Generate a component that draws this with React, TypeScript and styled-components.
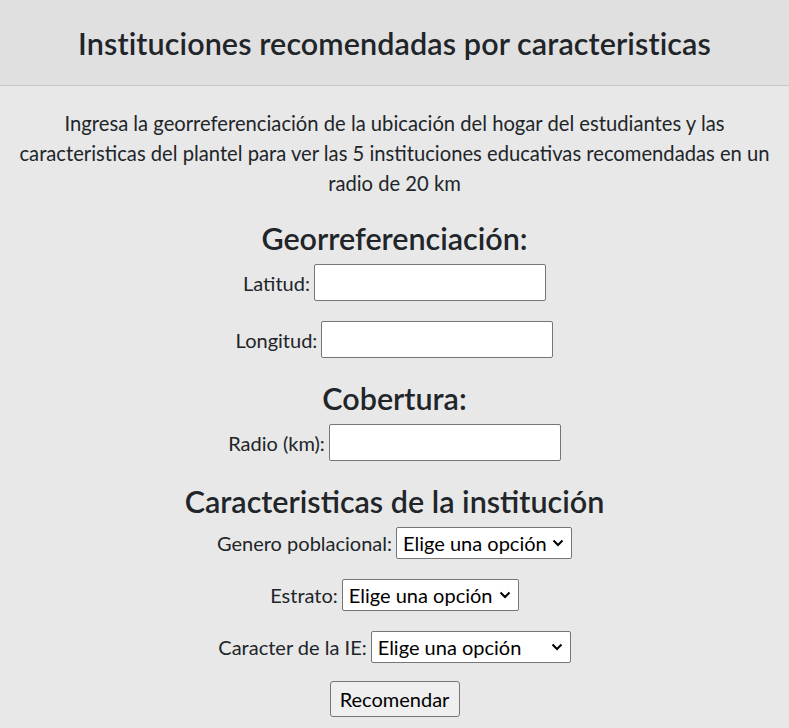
import React from "react";
import styled, { createGlobalStyle } from "styled-components";

const GlobalStyle = createGlobalStyle`
  html, body { margin: 0; padding: 0; }
  body {
    background: #e8e8e8;
    font-family: "Lato", "Noto Sans", sans-serif;
    color: #212529;
  }
  * { box-sizing: border-box; }
`;

const Header = styled.header`
  height: 86px;
  background: #e0e0e0;
  border-bottom: 1px solid #c8c8c8;
  display: flex;
  align-items: center;
  justify-content: center;
`;

const Title = styled.h1`
  margin: 0;
  font-size: 30.5px;
  font-weight: 600;
  letter-spacing: 0.1px;
`;

const Main = styled.main`
  display: flex;
  flex-direction: column;
  align-items: center;
  padding: 22px 12px 0;
  text-align: center;
`;

const Intro = styled.p`
  margin: 0;
  font-size: 20.2px;
  line-height: 30px;
`;

const SectionTitle = styled.h2`
  margin: 22px 0 8px;
  font-size: 30.5px;
  line-height: 36px;
  font-weight: 600;
`;

const Row = styled.div<{ $gap?: number }>`
  display: flex;
  align-items: center;
  justify-content: center;
  gap: 4px;
  margin-bottom: ${(p) => p.$gap ?? 20}px;
`;

const Label = styled.label`
  font-size: 20px;
`;

const TextInput = styled.input`
  width: 232px;
  height: 37px;
  border: 1px solid #767676;
  border-radius: 2px;
  background: #fff;
  font-size: 18px;
  padding: 0 6px;
`;

const SelectWrap = styled.div`
  position: relative;
  display: inline-flex;
`;

const Select = styled.select<{ $w: number }>`
  appearance: none;
  -webkit-appearance: none;
  width: ${(p) => p.$w}px;
  height: 32px;
  border: 1px solid #767676;
  border-radius: 2px;
  background: #fff;
  font-family: "Lato", "Noto Sans", sans-serif;
  font-size: 20px;
  color: #000;
  padding: 0 18px 0 6px;
`;

const Chevron = styled.svg`
  position: absolute;
  right: 8px;
  top: 50%;
  transform: translateY(-50%);
  pointer-events: none;
`;

const Button = styled.button`
  width: 130px;
  height: 36px;
  background: #efefef;
  border: 1px solid #767676;
  border-radius: 3px;
  font-family: "Lato", "Noto Sans", sans-serif;
  font-size: 20px;
  color: #000;
  padding: 0;
`;

function Dropdown({ width, id }: { width: number; id: string }) {
  return (
    <SelectWrap>
      <Select id={id} $w={width} defaultValue="">
        <option value="">Elige una opción</option>
      </Select>
      <Chevron width="12" height="8" viewBox="0 0 12 8">
        <path d="M1.5 1.5 L6 6 L10.5 1.5" fill="none" stroke="#000" strokeWidth="2" />
      </Chevron>
    </SelectWrap>
  );
}

export default function App() {
  return (
    <>
      <GlobalStyle />
      <Header>
        <Title>Instituciones recomendadas por caracteristicas</Title>
      </Header>
      <Main>
        <Intro>
          Ingresa la georreferenciación de la ubicación del hogar del estudiantes y las
          caracteristicas del plantel para ver las 5 instituciones educativas recomendadas en un
          radio de 20 km
        </Intro>
        <SectionTitle>Georreferenciación:</SectionTitle>
        <Row>
          <Label htmlFor="lat">Latitud:</Label>
          <TextInput id="lat" type="text" />
        </Row>
        <Row $gap={0}>
          <Label htmlFor="lon">Longitud:</Label>
          <TextInput id="lon" type="text" />
        </Row>
        <SectionTitle>Cobertura:</SectionTitle>
        <Row $gap={0}>
          <Label htmlFor="radio">Radio (km):</Label>
          <TextInput id="radio" type="text" />
        </Row>
        <SectionTitle>Caracteristicas de la institución</SectionTitle>
        <Row>
          <Label htmlFor="genero">Genero poblacional:</Label>
          <Dropdown id="genero" width={176} />
        </Row>
        <Row>
          <Label htmlFor="estrato">Estrato:</Label>
          <Dropdown id="estrato" width={177} />
        </Row>
        <Row $gap={18}>
          <Label htmlFor="caracter">Caracter de la IE:</Label>
          <Dropdown id="caracter" width={200} />
        </Row>
        <Button type="button">Recomendar</Button>
      </Main>
    </>
  );
}
